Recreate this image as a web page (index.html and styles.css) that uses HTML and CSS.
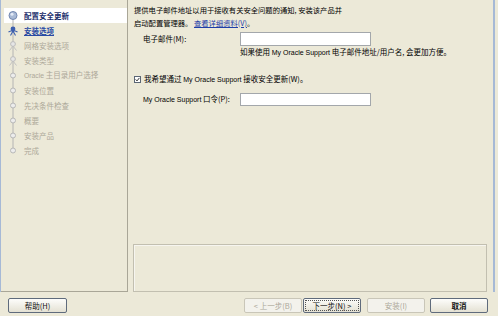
FILE: index.html
```html
<!DOCTYPE html>
<html lang="zh-CN">
<head>
    <meta charset="UTF-8">
    <meta name="viewport" content="width=device-width, initial-scale=1.0">
    <link rel="stylesheet" href="styles.css">
    <title>配置安全更新</title>
</head>
<body>
<div class="window">
    <div class="main">
        <!-- step list -->
        <div class="steps">
            <div class="step current">
                <svg viewBox="0 0 18 15"><line x1="9" y1="7.5" x2="9" y2="15" stroke="#b4b4b4"/><circle cx="9" cy="7.5" r="4" fill="#a9bad6" stroke="#7388b0"/><circle cx="8" cy="6.3" r="1.5" fill="#e4ebf6"/></svg>
                <span>配置安全更新</span>
            </div>
            <div class="step active">
                <svg viewBox="0 0 18 15"><line x1="9" y1="0" x2="9" y2="15" stroke="#b4b4b4"/><path d="M4.5 9 Q9 6.5 13.5 9 M9 8 L6.5 12.5 M9 8 L11.5 12.5" stroke="#3d5fae" stroke-width="1.1" fill="none"/><circle cx="9" cy="6" r="2.4" fill="#3d5fae"/></svg>
                <span>安装选项</span>
            </div>
            <div class="step">
                <svg viewBox="0 0 18 15"><line x1="9" y1="0" x2="9" y2="15" stroke="#b4b4b4"/><path d="M9 8 L5.5 12.5 M9 8 L12.5 12.5" stroke="#c2c2c2" fill="none"/><circle cx="9" cy="6" r="2.4" fill="#e6e6e6" stroke="#bcbcbc"/></svg>
                <span>网格安装选项</span>
            </div>
            <div class="step">
                <svg viewBox="0 0 18 15"><line x1="9" y1="0" x2="9" y2="15" stroke="#b4b4b4"/><path d="M9 8 L5.5 12.5 M9 8 L12.5 12.5" stroke="#c2c2c2" fill="none"/><circle cx="9" cy="6" r="2.4" fill="#e6e6e6" stroke="#bcbcbc"/></svg>
                <span>安装类型</span>
            </div>
            <div class="step">
                <svg viewBox="0 0 18 15"><line x1="9" y1="0" x2="9" y2="15" stroke="#b4b4b4"/><circle cx="9" cy="7.5" r="2.5" fill="#ececec" stroke="#b8b8b8"/></svg>
                <span><span class="en">Oracle</span> 主目录用户选择</span>
            </div>
            <div class="step">
                <svg viewBox="0 0 18 15"><line x1="9" y1="0" x2="9" y2="15" stroke="#b4b4b4"/><circle cx="9" cy="7.5" r="2.5" fill="#ececec" stroke="#b8b8b8"/></svg>
                <span>安装位置</span>
            </div>
            <div class="step">
                <svg viewBox="0 0 18 15"><line x1="9" y1="0" x2="9" y2="15" stroke="#b4b4b4"/><circle cx="9" cy="7.5" r="2.5" fill="#ececec" stroke="#b8b8b8"/></svg>
                <span>先决条件检查</span>
            </div>
            <div class="step">
                <svg viewBox="0 0 18 15"><line x1="9" y1="0" x2="9" y2="15" stroke="#b4b4b4"/><circle cx="9" cy="7.5" r="2.5" fill="#ececec" stroke="#b8b8b8"/></svg>
                <span>概要</span>
            </div>
            <div class="step">
                <svg viewBox="0 0 18 15"><line x1="9" y1="0" x2="9" y2="15" stroke="#b4b4b4"/><circle cx="9" cy="7.5" r="2.5" fill="#ececec" stroke="#b8b8b8"/></svg>
                <span>安装产品</span>
            </div>
            <div class="step">
                <svg viewBox="0 0 18 15"><line x1="9" y1="0" x2="9" y2="7.5" stroke="#b4b4b4"/><circle cx="9" cy="7.5" r="2.5" fill="#ececec" stroke="#b8b8b8"/></svg>
                <span>完成</span>
            </div>
        </div>

        <!-- page body -->
        <div class="content">
            <p class="intro">提供电子邮件地址以用于接收有关安全问题的通知, 安装该产品并<br>启动配置管理器。 <a href="#" class="link">查看详细资料(V)</a>。</p>

            <div class="field">
                <label for="email">电子邮件(M):</label>
                <input id="email" type="text">
            </div>
            <p class="hint">如果使用 <span class="en">My Oracle Support</span> 电子邮件地址/用户名, 会更加方便。</p>

            <div class="check">
                <svg class="box" viewBox="0 0 7 7"><rect x="0.5" y="0.5" width="6" height="6" fill="#fff" stroke="#5b6675"/><path d="M1.6 3.4 L3 4.9 L5.4 1.9" stroke="#333" stroke-width="1" fill="none"/></svg>
                <span>我希望通过 <span class="en">My Oracle Support</span> 接收安全更新(W)。</span>
            </div>

            <div class="field pw">
                <label for="pw"><span class="en">My Oracle Support</span> 口令(P):</label>
                <input id="pw" type="password">
            </div>

            <div class="msg"></div>
        </div>
    </div>

    <div class="footer">
        <button class="btn">帮助(H)</button>
        <div class="spacer"></div>
        <button class="btn back" disabled>&lt; 上一步(B)</button>
        <button class="btn next">下一步(N) &gt;</button>
        <button class="btn install" disabled>安装(I)</button>
        <button class="btn cancel">取消</button>
    </div>
</div>
</body>
</html>
```

FILE: styles.css
```css
/* Global */
body {
    margin: 0;
    background: #ece9d8;
    font: 7.5px/12px "Noto Sans CJK SC", sans-serif;
    color: #000;
}

.en {
    font-family: "Liberation Sans", sans-serif;
    font-size: 7px;
}

.window {
    width: 498px;
    height: 316px;
    display: flex;
    flex-direction: column;
}

.main {
    width: 495px;
    height: 292px;
    box-sizing: border-box;
    display: flex;
    border-left: 1px solid #a6b9d6;
    border-right: 2px solid #a6b9d6;
}

/* Steps */
.steps {
    width: 127px;
    flex: none;
    box-sizing: border-box;
    padding: 8px 0 0 3px;
    border-right: 1px solid #a9a697;
    border-bottom: 1px solid #a9a697;
}

.step {
    height: 15px;
    display: flex;
    align-items: center;
    white-space: nowrap;
    color: #aca899;
}

.step svg {
    width: 18px;
    height: 15px;
    flex: none;
    margin-right: 2px;
}

.step .en {
    font-size: 6.8px;
}

.step.current {
    background: #fff;
    color: #1c2f6b;
    font-weight: bold;
}

.step.active {
    color: #2949a3;
    font-weight: bold;
    text-decoration: underline;
}

/* Content */
.content {
    flex: 1;
    display: flex;
    flex-direction: column;
    padding: 4px 0 0 6px;
}

.intro {
    margin: 0;
    line-height: 12.5px;
    font-size: 7.3px;
}

.link {
    color: #1f3ea8;
}

.field {
    display: flex;
    align-items: center;
    margin-top: 3px;
}

.field label {
    width: 106px;
    box-sizing: border-box;
    padding-left: 9px;
    flex: none;
}

.field input {
    width: 131px;
    height: 14px;
    box-sizing: border-box;
    border: 1px solid #a3a7ab;
    background: #fff;
    padding: 0;
}

.hint {
    margin: 0 0 0 106px;
}

.check {
    display: flex;
    align-items: center;
    margin-top: 14px;
}

.check .box {
    width: 7px;
    height: 7px;
    margin-right: 3px;
    flex: none;
}

.field.pw {
    margin-top: 7px;
}

.field.pw input {
    height: 13px;
}

.msg {
    margin-top: auto;
    margin-left: -1px;
    width: 354px;
    height: 48px;
    box-sizing: border-box;
    border: 1px solid #c2bfb0;
    box-shadow: inset 1px 1px 0 #f6f5ef;
}

/* Footer buttons */
.footer {
    display: flex;
    padding: 6px 10px 0 8px;
}

.spacer {
    flex: 1;
}

.btn {
    width: 58px;
    height: 15px;
    padding: 0;
    font: 7.5px/13px "Noto Sans CJK SC", sans-serif;
    color: #111;
    border: 1px solid #5f6b7c;
    border-radius: 2px;
    background: linear-gradient(#fdfdfb, #e4e1d3);
}

.footer .btn:first-child {
    width: 59px;
}

.btn:disabled {
    color: #aca899;
    border-color: #c9c6b8;
    background: #f3f2ec;
}

.next {
    margin-left: 1px;
    outline: 1px dotted #555;
    outline-offset: -3px;
}

.install {
    margin-left: 6px;
}

.cancel {
    margin-left: 5px;
    font-weight: bold;
}
```
